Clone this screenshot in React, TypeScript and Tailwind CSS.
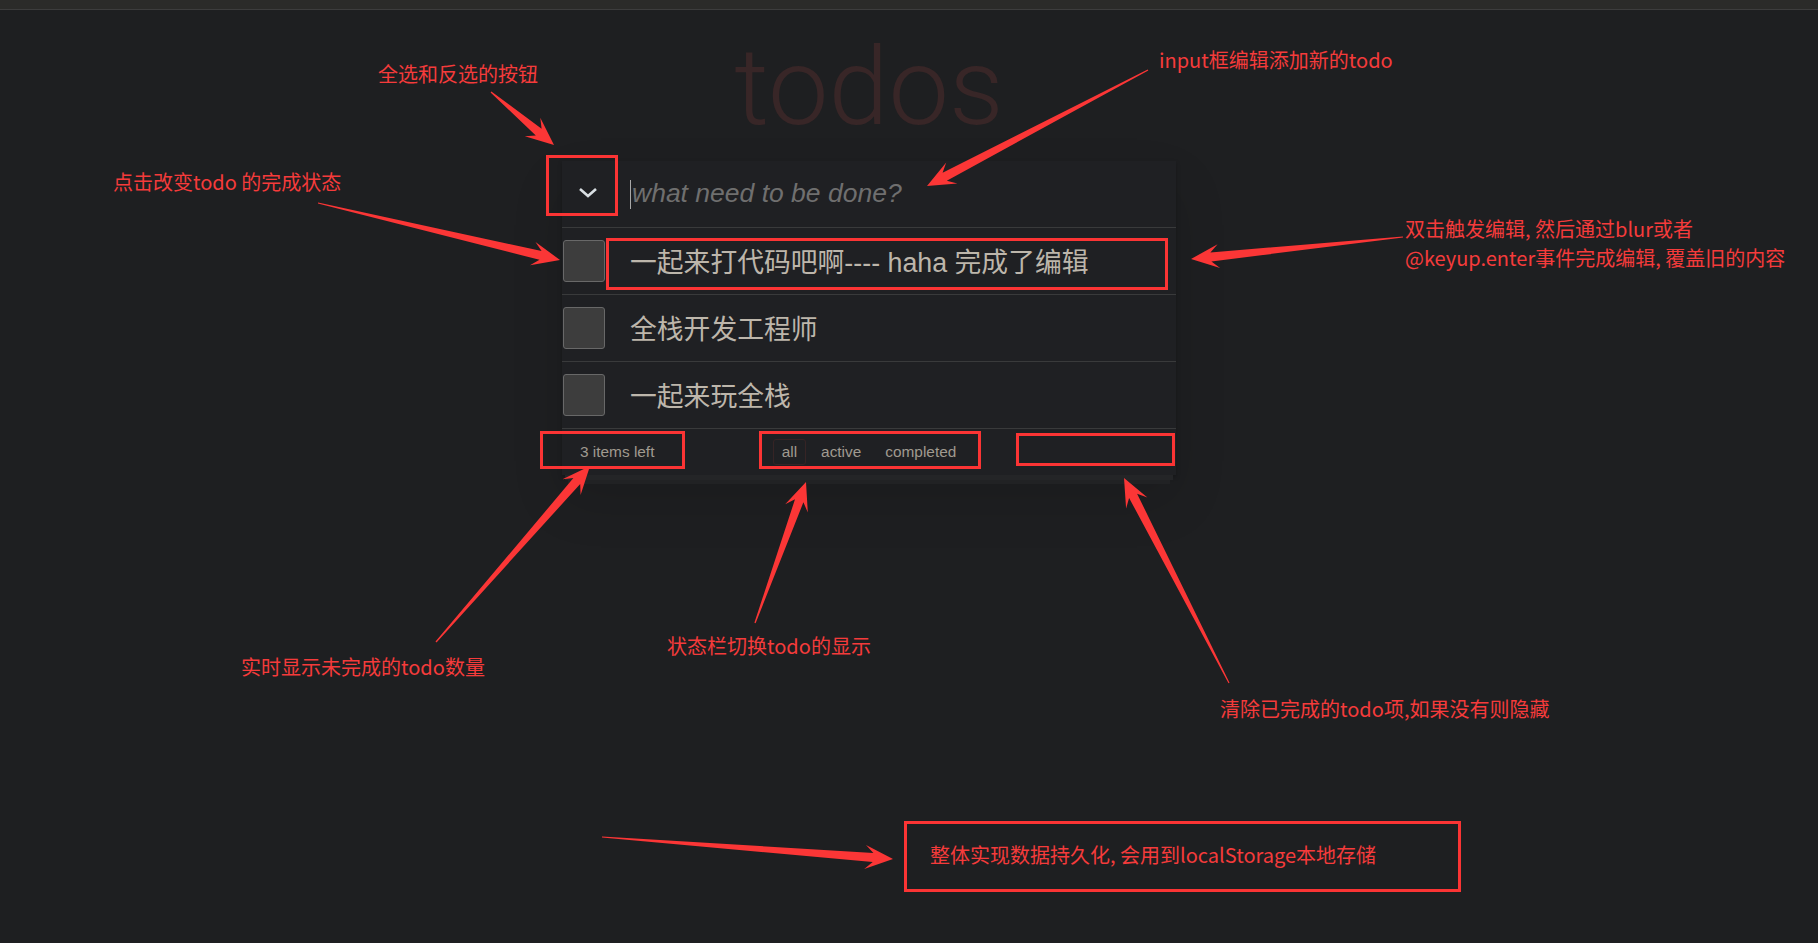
import React from "react"

const todos = ["一起来打代码吧啊---- haha 完成了编辑", "全栈开发工程师", "一起来玩全栈"]

// red annotation arrows: [tailX, tailY, tipX, tipY]
const arrows: [number, number, number, number][] = [
  [491, 92, 554, 145],
  [1148, 70, 927, 186],
  [318, 203, 560, 260],
  [1403, 237, 1191, 259],
  [436, 642, 590, 466],
  [755, 623, 806, 482],
  [1229, 683, 1124, 478],
  [602, 837, 893, 859],
]

function arrowPoints(x1: number, y1: number, x2: number, y2: number) {
  const dx = x2 - x1
  const dy = y2 - y1
  const len = Math.hypot(dx, dy)
  const ux = dx / len
  const uy = dy / len
  const nx = -uy
  const ny = ux
  const headLen = 28
  const headHalf = 12
  const shaftHalf = 4.5
  const joint = 20
  const bx = x2 - ux * headLen
  const by = y2 - uy * headLen
  const jx = x2 - ux * joint
  const jy = y2 - uy * joint
  const pts = [
    [x1 + nx * 0.6, y1 + ny * 0.6],
    [jx + nx * shaftHalf, jy + ny * shaftHalf],
    [bx + nx * headHalf, by + ny * headHalf],
    [x2, y2],
    [bx - nx * headHalf, by - ny * headHalf],
    [jx - nx * shaftHalf, jy - ny * shaftHalf],
    [x1 - nx * 0.6, y1 - ny * 0.6],
  ]
  return pts.map((p) => `${p[0].toFixed(1)},${p[1].toFixed(1)}`).join(" ")
}

const note = "absolute text-[20px] leading-[28px] text-[#f53b3b] whitespace-nowrap font-['Noto_Sans_CJK_SC','Noto_Sans',sans-serif]"
const box = "absolute border-[3px] border-[#fb3434]"

export default function App() {
  return (
    <div className="relative h-[943px] w-[1818px] overflow-hidden bg-[#1e1f21] font-['Liberation_Sans','Noto_Sans_CJK_SC',sans-serif]">
      {/* TOP BAR */}
      <div className="h-[10px] bg-[#2b2b29] border-b border-[#3d3d3d]" />

      {/* TODO APP */}
      <div className="ml-[562px] w-[614px] flex flex-col">
        <h1 className="mt-[23px] h-[108px] text-center text-[108px] leading-[108px] font-light text-[#382627] font-['Roboto','Liberation_Sans',sans-serif]">
          todos
        </h1>

        <div className="mt-[20px] bg-[#1f2023] shadow-[0_2px_4px_rgba(0,0,0,0.25),0_25px_50px_rgba(0,0,0,0.12)]">
          {/* INPUT ROW */}
          <div className="flex h-[67px] items-center border-b border-[#393a3b]">
            <div className="flex w-[52px] items-center justify-center pb-[4px]">
              <svg width="20" height="11" viewBox="0 0 20 11">
                <polyline points="2,2 10,9 18,2" fill="none" stroke="#d9dfe3" strokeWidth="2.6" strokeLinejoin="miter" />
              </svg>
            </div>
            <div className="ml-[16px] flex items-center">
              <span className="h-[29px] w-px bg-[#a8a8a8]" />
              <span className="pl-[1px] text-[26.5px] italic text-[#6f6f6f]">what need to be done?</span>
            </div>
          </div>

          {/* TODO ITEMS */}
          {todos.map((t) => (
            <div key={t} className="flex h-[67px] items-center border-b border-[#393a3b]">
              <div className="ml-px h-[42px] w-[42px] rounded-[3px] border-[1.5px] border-[#686868] bg-[#3d3d3d]" />
              <span className="ml-[25px] pt-[5px] text-[26.8px] text-[#bdb6ab] font-['Liberation_Sans','Noto_Sans_CJK_SC',sans-serif]">{t}</span>
            </div>
          ))}

          {/* FOOTER */}
          <div className="grid h-[46px] grid-cols-[1fr_auto_1fr] items-center px-[18px] text-[15.4px] text-[#a09a90]">
            <span className="pb-[1px]">3 items left</span>
            <div className="flex items-center">
              <span className="mx-[3px] rounded-[3px] border border-[#362425] px-[8px] py-[3px] leading-[18px]">all</span>
              <span className="mx-[3px] rounded-[3px] border border-transparent px-[8px] py-[3px] leading-[18px]">active</span>
              <span className="mx-[3px] rounded-[3px] border border-transparent px-[8px] py-[3px] leading-[18px]">completed</span>
            </div>
            <span />
          </div>
        </div>
        {/* stacked paper edge */}
        <div className="mx-[3px] h-[5px] bg-[#242527]" />
        <div className="mx-[6px] h-[4px] bg-[#212224]" />
      </div>

      {/* ANNOTATION BOXES */}
      <div className={`${box} left-[546px] top-[155px] h-[61px] w-[72px]`} />
      <div className={`${box} left-[606px] top-[238px] h-[52px] w-[562px]`} />
      <div className={`${box} left-[540px] top-[431px] h-[38px] w-[145px]`} />
      <div className={`${box} left-[759px] top-[431px] h-[38px] w-[222px]`} />
      <div className={`${box} left-[1016px] top-[433px] h-[33px] w-[159px]`} />
      <div className={`${box} left-[904px] top-[821px] h-[71px] w-[557px]`} />

      {/* ANNOTATION TEXT */}
      <span className={`${note} left-[378px] top-[60px]`}>全选和反选的按钮</span>
      <span className={`${note} left-[1159px] top-[46px]`}>input框编辑添加新的todo</span>
      <span className={`${note} left-[113px] top-[168px]`}>点击改变todo 的完成状态</span>
      <div className={`${note} left-[1405px] top-[214px] leading-[29px]`}>
        <div>双击触发编辑, 然后通过blur或者</div>
        <div>@keyup.enter事件完成编辑, 覆盖旧的内容</div>
      </div>
      <span className={`${note} left-[241px] top-[653px]`}>实时显示未完成的todo数量</span>
      <span className={`${note} left-[667px] top-[632px]`}>状态栏切换todo的显示</span>
      <span className={`${note} left-[1220px] top-[695px]`}>清除已完成的todo项,如果没有则隐藏</span>
      <span className={`${note} left-[930px] top-[841px]`}>整体实现数据持久化, 会用到localStorage本地存储</span>

      {/* ARROWS */}
      <svg className="pointer-events-none absolute left-0 top-0" width="1818" height="943" viewBox="0 0 1818 943">
        {arrows.map((a, i) => (
          <polygon key={i} points={arrowPoints(a[0], a[1], a[2], a[3])} fill="#fb3636" />
        ))}
      </svg>
    </div>
  )
}
